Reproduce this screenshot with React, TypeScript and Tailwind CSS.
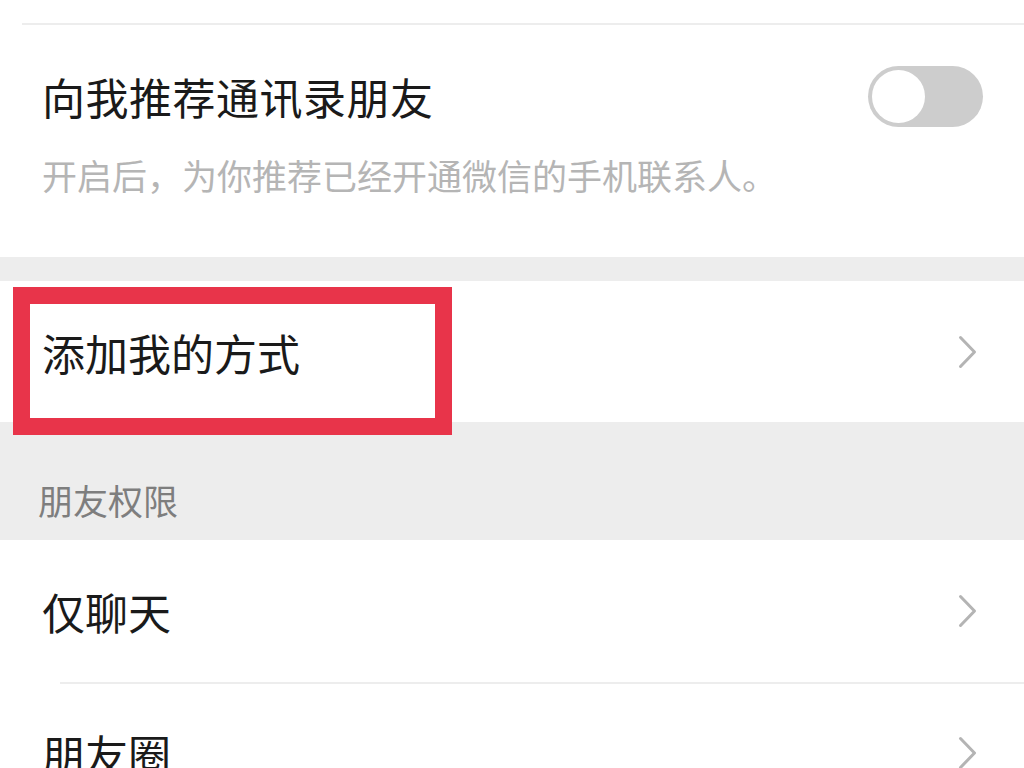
import React from "react";

const font = { fontFamily: '"Noto Sans CJK SC", "Noto Sans", sans-serif' };

function Chevron() {
  return (
    <svg width="19" height="34" viewBox="0 0 19 34" fill="none">
      <polyline points="2.5,2.5 16.5,17 2.5,31.5" stroke="#b4b4b4" strokeWidth="3" strokeLinecap="round" strokeLinejoin="round" />
    </svg>
  );
}

export default function App() {
  return (
    <div className="w-[1024px] h-[768px] overflow-hidden bg-white text-[#1a1a1a]" style={font}>
      <div className="h-[23px]" />
      <div className="h-[2px] ml-[22px] bg-[#ededed]" />
      <div className="h-[232px] pt-[43px] pl-[42px] pr-[41px]">
        <div className="flex items-center justify-between h-[56px]">
          <span className="text-[43px] leading-[56px] tracking-[0.5px]">向我推荐通讯录朋友</span>
          <div className="w-[115px] h-[61px] rounded-full bg-[#cdcdcd] p-[4px]">
            <div className="w-[53px] h-[53px] rounded-full bg-white" />
          </div>
        </div>
        <div className="mt-[27px] text-[35px] leading-[48px] text-[#b5b5b5]">开启后，为你推荐已经开通微信的手机联系人。</div>
      </div>
      <div className="h-[24px] bg-[#ededed]" />
      <div className="relative h-[141px] flex items-center justify-between pl-[42px] pr-[47px]">
        <span className="text-[43px] leading-[56px]">添加我的方式</span>
        <Chevron />
        <div className="absolute z-10 left-[13px] top-[6px] w-[439px] h-[148px] border-[17px] border-[#e8344a]" />
      </div>
      <div className="h-[118px] bg-[#ededed] pt-[56px] pl-[38px]">
        <span className="text-[35px] leading-[44px] text-[#7e7e7e]">朋友权限</span>
      </div>
      <div className="h-[142px] flex items-center justify-between pl-[42px] pr-[47px]">
        <span className="text-[43px] leading-[56px]">仅聊天</span>
        <Chevron />
      </div>
      <div className="h-[2px] ml-[60px] bg-[#ededed]" />
      <div className="h-[138px] flex items-center justify-between pl-[42px] pr-[47px]">
        <span className="text-[43px] leading-[56px]">朋友圈</span>
        <Chevron />
      </div>
    </div>
  );
}
